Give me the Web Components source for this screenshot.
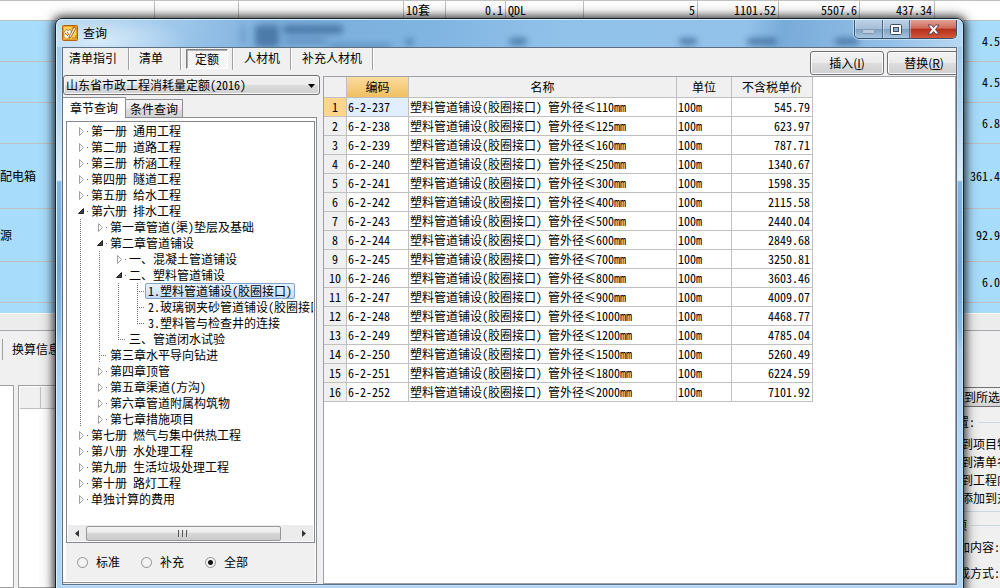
<!DOCTYPE html>
<html lang="zh-CN">
<head>
<meta charset="utf-8">
<title>查询</title>
<style>
html,body{margin:0;height:100%;overflow:hidden}
body{position:relative;background:#f0f0f0;color:#000;font:12px/16px "Noto Sans Mono CJK SC","Noto Sans CJK SC","Liberation Mono",monospace}
</style>
</head>
<body>
<estimate-app></estimate-app>
<query-window heading="查询">
  <query-toolbar slot="toolbar"></query-toolbar>
  <chapter-panel slot="side"></chapter-panel>
  <price-table slot="main"></price-table>
</query-window>
<script>
const define=(name,render)=>customElements.define(name,class extends HTMLElement{
  connectedCallback(){
    if(this.shadowRoot)return;
    this.attachShadow({mode:'open'}).innerHTML='<style>*{box-sizing:border-box}</style>'+render(this);
  }
});

/* Estimate sheet and side panes behind the dialog */
const sheetRows=[[41,'','4.5'],[41,'','4.5'],[41,'','6.8'],[65,'配电箱','361.4'],[53,'源','92.9'],[41,'','6.0'],[10,'','']];
define('estimate-app',()=>`<style>
:host{display:flex;flex-direction:column;height:100%;overflow:hidden;background:#f0f0f0}
table{width:100%;table-layout:fixed;border-collapse:separate;border-spacing:0;flex:none}
.top{background:#fff;border-top:1px solid #c0c0c0}
.top td{height:20px;padding:0 2px 2px;border-right:1px solid #c0c0c0;border-bottom:1px solid #c0c0c0;white-space:nowrap}
.top td:last-child{border-right:0}
.r{text-align:right}
.blue{background:#a8dcfb}
.blue td{padding:0;border-bottom:1px solid #bfbfbf;white-space:nowrap}
.blue tr:last-child td{border:0}
.strip{flex:none;height:18px;background:#ececec;border-top:1px solid #fff;border-bottom:1px solid #a5a5b0}
.lower{flex:1;display:flex;justify-content:space-between;min-height:0}
.left{display:flex;flex-direction:column;width:120px;padding-top:8px}
.tab{height:21px;border-left:1px solid #a0a0a0;margin-left:2px;padding:2px 9px}
.panes{flex:1;display:flex;gap:4px;margin-top:25px}
.pane{border:1px solid #a0a0a0;background:#fff;width:14px;border-left:0}
.pane+.pane{flex:1;border-left:1px solid #a0a0a0}
.head{height:22px;margin:1px 0 0 1px;background:#f0f0f0;border-bottom:1px solid #c0c0c0}
.head i{display:block;width:21px;height:21px;border-right:1px solid #c0c0c0}
.right{width:51px;padding-top:56px;white-space:nowrap;overflow:hidden}
.right button{display:block;font:inherit;color:inherit;padding:0 0 0 14px;width:80px;height:20px;text-align:left;border:1px solid #707070;background:linear-gradient(#f3f3f3,#d4d4d4)}
.right h3{display:flex;align-items:center;gap:4px;font:inherit;margin:7px 0 6px;margin-left:-4px}
.right h3:after{content:"";flex:1;height:1px;background:#c8d8e0}
.right p{margin:0;height:18px;padding-left:12px}
.right h3.two{margin:5px 0 6px -6px}
.right .f{height:26px;padding-left:9px}
.rule{height:1px;background:#c8d8e0;margin-top:3px}
</style>
<table class="top"><colgroup><col style="width:155px"><col style="width:84px"><col style="width:165px"><col style="width:42px"><col style="width:60px"><col style="width:78px"><col style="width:114px"><col style="width:81px"><col style="width:81px"><col style="width:75px"><col></colgroup>
<tr><td></td><td></td><td></td><td>10套</td><td class="r">0.1</td><td>QDL</td><td class="r">5</td><td class="r">1101.52</td><td class="r">5507.6</td><td class="r">437.34</td><td></td></tr></table>
<table class="blue">${sheetRows.map(([h,a,b])=>`<tr><td style="height:${h}px">${a}</td><td class="r">${b}</td></tr>`).join('')}</table>
<div class="strip"></div>
<div class="lower">
<div class="left"><div class="tab">换算信息</div><div class="panes"><div class="pane"></div><div class="pane"><div class="head"><i></i></div></div></div></div>
<div class="right"><button type="button">到所选</button><h3>位置:</h3><p>到项目特</p><p>到清单名</p><p>到工程内</p><p>添加到对</p><div class="rule"></div><h3 class="two">选项</h3><p class="f">加内容:</p><p class="f">成方式:</p></div>
</div>`);

/* Glass window frame */
define('query-window',el=>`<style>
:host{position:absolute;left:55px;right:36px;top:18px;bottom:-4px;display:flex;flex-direction:column;padding:0 6px 6px;border:1px solid #17242f;border-radius:7px 7px 0 0;
box-shadow:inset 1px 1px #d8f2ff,inset -1px 0 #c0e8fc,0 0 7px 2px rgba(0,0,0,.6),0 0 14px 3px rgba(0,0,0,.3);
background:linear-gradient(#9bc4e8 0,#b8d6f0 90px,#e2eef8 161px,#86b6e2 163px,#74a7d5 250px,#8abae4 310px,#a9cbec 330px,#b5d8f8 420px,#b0d4f5)}
header{position:relative;flex:none;display:flex;align-items:center;height:28px;margin:0 -5px;padding:0 5px 2px;overflow:hidden;border-radius:6px 6px 0 0;border-top:1px solid #d5efff;
background:radial-gradient(ellipse 90px 28px at 40px 20px,rgba(220,238,252,.9),transparent),linear-gradient(100deg,#b3d3ef 0,#9cc6ea 14%,#7caedc 24%,#7fb3e0 40%,#91c2ea 56%,#92c2ea 76%,#79abd9 80%,#93c0e8 92%,#b9d8f2)}
svg.app{margin-right:5px}
h1{flex:1;margin:0;font:12px/16px "Noto Sans CJK SC",sans-serif}
.smudge{position:absolute;border-radius:4px;background:#24507f;filter:blur(3px);opacity:.6}
.caps{position:relative;align-self:flex-start;display:flex;height:19px;border:1px solid #35516c;border-top:0;border-radius:0 0 5px 5px;overflow:hidden;box-shadow:0 0 0 1px rgba(220,240,255,.6)}
.caps button{width:28px;padding:0;border:0;border-right:1px solid #4b6a88;background:linear-gradient(#bcd1e6,#a5bed8 48%,#7f9fbf 50%,#a6c6e2);box-shadow:inset 1px 0 rgba(255,255,255,.4);display:grid;place-items:center}
.caps button:first-child{padding-top:4px}
.caps button:nth-child(2){width:27px}
.caps button.close{width:46px;border-right:0;background:linear-gradient(#e2a194,#cf6a58 46%,#b32e18 50%,#d4573c)}
main{flex:1;min-height:0;display:flex;flex-direction:column;background:#f0f0f0;border:1px solid #5d6f82;outline:1px solid rgba(205,232,252,.7);overflow:hidden}
.body{flex:1;min-height:0;display:flex;gap:3px}
</style>
<header>
<span class="smudge" style="left:198px;top:5px;width:24px;height:22px;opacity:.55"></span>
<span class="smudge" style="left:184px;top:6px;width:4px;height:18px;opacity:.3"></span>
<span class="smudge" style="left:226px;top:5px;width:60px;height:9px;opacity:.55"></span>
<span class="smudge" style="left:228px;top:18px;width:42px;height:6px;opacity:.3"></span>
<span class="smudge" style="left:272px;top:24px;width:62px;height:5px;opacity:.35"></span>
<span class="smudge" style="left:349px;top:19px;width:7px;height:6px"></span>
<span class="smudge" style="left:452px;top:18px;width:18px;height:7px"></span>
<span class="smudge" style="left:622px;top:18px;width:18px;height:7px"></span>
<span class="smudge" style="left:690px;top:18px;width:30px;height:7px"></span>
<span class="smudge" style="left:778px;top:18px;width:24px;height:7px"></span>
<svg class="app" width="16" height="16" viewBox="0 0 16 16"><rect x=".5" y=".5" width="15" height="15" rx="1" fill="#f0a020" stroke="#b5640c"/><path d="M2 2h8l-1 3 4-3h1v12H2z" fill="#ffd45e"/><path d="M2 7l3-3 1 2 2-2 2 4-2 5-3 1-3-2z" fill="#fff8e4" stroke="#a65a0c" stroke-width=".6"/><path d="M7 12l5-10 2 1-5 9-2 1z" fill="#fff" stroke="#87440a" stroke-width=".8"/><path d="M3 8l3 3M5 7l2 3M10 13h4v-3" stroke="#c06a0e" fill="none"/></svg>
<h1>${el.getAttribute('heading')}</h1>
<div class="caps">
<button type="button" aria-label="最小化"><svg width="13" height="5"><rect x=".5" y=".5" width="12" height="4" rx="1" fill="#b9cbdc" stroke="#8499af"/></svg></button>
<button type="button" aria-label="最大化"><svg width="12" height="11"><rect x=".5" y=".5" width="11" height="10" rx="1" fill="#fff" stroke="#414c63"/><rect x="3.5" y="3.5" width="5" height="4" fill="#8fadca" stroke="#414c63"/></svg></button>
<button type="button" class="close" aria-label="关闭"><svg width="13" height="11" viewBox="0 0 13 11"><path d="M1 1h3.500l2 2.500 2-2.500H12L8.500 5.500 12 10H8.500l-2-2.500-2 2.500H1l3.500-4.500z" fill="#f6f6f6" stroke="#513a49" stroke-width=".9"/></svg></button>
</div></header>
<main><slot name="toolbar"></slot><div class="body"><slot name="side"></slot><slot name="main"></slot></div></main>`);

define('query-toolbar',()=>`<style>
:host{display:flex;justify-content:space-between;height:27px;flex:none}
nav{display:flex;height:22px}
nav button{font:inherit;color:inherit;border:0;background:none;padding:0 10px;height:20px}
nav span{display:flex;border-right:1px solid #a0a0a0;box-shadow:1px 0 #fff;margin-right:1px}
nav span:first-child button{padding:0 11px 0 6px}
nav span:nth-child(2) button{padding:0 17px 0 9px}
nav span:nth-child(3){padding:1px 4px}
nav span:nth-child(4) button{padding:0 10px}
nav button[aria-pressed=true]{width:42px;padding:0;border:1px solid;border-color:#808080 #fff #fff #808080;box-shadow:inset 1px 1px #b0b0b0;background:repeating-conic-gradient(#fff 0 25%,#ededed 0 50%) 0 0/2px 2px}
.acts{display:flex;gap:3px;margin:3px -5px 0 0}
.acts button{width:74px;height:24px;padding:0;border:1px solid #707070;border-radius:3px;box-shadow:inset 0 0 0 1px #fcfcfc;background:linear-gradient(#f2f2f2,#ebebeb 48%,#dddddd 50%,#cfcfcf);font:12px/16px "Noto Sans CJK SC",sans-serif;color:#000}
</style>
<nav><span><button type="button">清单指引</button></span><span><button type="button">清单</button></span><span><button type="button" aria-pressed="true">定额</button></span><span><button type="button">人材机</button></span><span><button type="button">补充人材机</button></span></nav>
<div class="acts"><button type="button">插入(<u>I</u>)</button><button type="button">替换(<u>R</u>)</button></div>`);

define('chapter-panel',()=>`<style>
:host{display:flex;flex-direction:column;width:257px;flex:none}
.combo{position:relative;flex:none}
select{appearance:none;display:block;width:100%;height:20px;padding:0 2px;margin:0;font:inherit;color:inherit;border:1px solid #707070;border-radius:3px;box-shadow:inset 0 0 0 1px #fafafa;background:linear-gradient(#f2f2f2,#ebebeb 48%,#dddddd 50%,#cfcfcf)}
.combo svg{position:absolute;right:5px;top:9px;pointer-events:none}
.tabs{display:flex;align-items:flex-end;height:21px;margin:2px 0 -1px;position:relative}
.tabs button{font:inherit;color:inherit;padding:0;width:57px;height:19px;border:1px solid #8c8e94;background:linear-gradient(#f2f2f2,#ebebeb 50%,#dddddd 52%,#d0d0d0)}
.tabs button[aria-selected=true]{width:63px;height:21px;background:#fff;border-bottom:0;border-left:0}
.tabs button+button{border-left:0}
.pane{flex:1;min-height:0;display:flex;flex-direction:column;width:254px;padding:3px 1px 1px 3px;margin-bottom:1px;border:1px solid #8c8e94;border-left:0;background:#fff}
.box{flex:1;min-height:0;display:flex;flex-direction:column;border:1px solid #828790;padding:1px}
chapter-tree{flex:1}
.bar{display:flex;align-items:center;height:16px;background:#ececec}
.bar button{width:18px;height:16px;padding:0;border:0;background:none;display:grid;place-items:center}
.thumb{flex:1;display:flex;justify-content:center;align-items:center;gap:1px;height:15px;border:1px solid #979797;border-radius:2px;margin-right:14px;background:linear-gradient(#f5f5f5,#e8e8e8 48%,#d6d6d6 50%,#cbcbcb)}
.thumb i{width:2px;height:7px;margin-right:1px;background:linear-gradient(90deg,#555 50%,#ddd 50%)}
.kinds{display:flex;flex:none;align-items:center;height:38px;padding:0 11px;background:#f0f0f0}
label{display:flex;align-items:center;gap:8px;width:64px}
input{appearance:none;flex:none;width:11px;height:11px;margin:0;border:1px solid #8e8f8f;border-radius:50%;background:#f4f4f4}
input:checked{background:radial-gradient(circle,#111 0 2px,#f4f4f4 3px)}
</style>
<div class="combo"><select aria-label="定额库"><option>山东省市政工程消耗量定额(2016)</option></select><svg width="7" height="4"><path d="M0 0h7L3.500 4z"/></svg></div>
<div class="tabs" role="tablist"><button type="button" role="tab" aria-selected="true">章节查询</button><button type="button" role="tab">条件查询</button></div>
<div class="pane"><div class="box"><chapter-tree></chapter-tree>
<div class="bar"><button type="button" aria-label="向左"><svg width="4" height="7"><path d="M4 0v7L0 3.500z" fill="#333"/></svg></button><div class="thumb"><i></i><i></i><i></i></div><button type="button" aria-label="向右"><svg width="4" height="7"><path d="M0 0v7L4 3.500z" fill="#333"/></svg></button></div></div>
<div class="kinds" role="radiogroup"><label><input type="radio" name="k">标准</label><label><input type="radio" name="k">补充</label><label><input type="radio" name="k" checked>全部</label></div></div>`);

/* One letter per indent cell: v line, t branch, e last branch, c closed, o open */
const nodes=[['c','第一册 通用工程'],['c','第二册 道路工程'],['c','第三册 桥涵工程'],['c','第四册 隧道工程'],['c','第五册 给水工程'],['o','第六册 排水工程'],
['vc','第一章管道(渠)垫层及基础'],['vo','第二章管道铺设'],['vvc','一、混凝土管道铺设'],['vvo','二、塑料管道铺设'],
['vvvt','1.塑料管道铺设(胶圈接口)',1],['vvvt','2.玻璃钢夹砂管道铺设(胶圈接口)'],['vvve','3.塑料管与检查井的连接'],['vve','三、管道闭水试验'],
['vt','第三章水平导向钻进'],['vc','第四章顶管'],['vc','第五章渠道(方沟)'],['vc','第六章管道附属构筑物'],['vc','第七章措施项目'],
['c','第七册 燃气与集中供热工程'],['c','第八册 水处理工程'],['c','第九册 生活垃圾处理工程'],['c','第十册 路灯工程'],['c','单独计算的费用']];
const guides={
v:'<path d="M11.500 0v16"/>',t:'<path d="M11.500 0v16M11 8.500h8"/>',e:'<path d="M11.500 0v8M11 8.500h8"/>',
c:'<path class="a" d="M10.500 4.500v8l4-4z"/><path d="M18.500 8v1"/>',o:'<path class="b" d="M14.500 5.500v5H9.500z"/><path d="M18.500 8v1"/>'};
define('chapter-tree',()=>`<style>
:host{display:block;min-height:0;overflow:hidden}
ul{list-style:none;margin:0;padding:0 0 0 1px}
li{display:flex;height:16px;white-space:nowrap}
svg{flex:none;width:19px;height:16px}
path{fill:none;stroke:#707070;stroke-dasharray:1 1}
.a{stroke:#a0a0a0;stroke-dasharray:none}
.b{fill:#404040;stroke:#222;stroke-dasharray:none}
span{height:16px;line-height:14px;padding:0 2px;border:1px solid transparent;border-radius:2px}
.on{border-color:#7da2ce;background:linear-gradient(#ebf3fd,#c4dcfb)}
</style><ul role="tree">${nodes.map(([g,t,s])=>`<li role="treeitem">${[...g].map(c=>`<svg>${guides[c]}</svg>`).join('')}<span class="${s?'on':''}">${t}</span></li>`).join('')}</ul>`);

const items=[[237,110,'545.79'],[238,125,'623.97'],[239,160,'787.71'],[240,250,'1340.67'],[241,300,'1598.35'],[242,400,'2115.58'],[243,500,'2440.04'],[244,600,'2849.68'],[245,700,'3250.81'],[246,800,'3603.46'],[247,900,'4009.07'],[248,1000,'4468.77'],[249,1200,'4785.04'],[250,1500,'5260.49'],[251,1800,'6224.59'],[252,2000,'7101.92']];
define('price-table',()=>`<style>
:host{display:block;flex:1;min-width:0;margin-top:1px;background:#fff;border:1px solid #a0a0a8;overflow:hidden}
table{table-layout:fixed;width:489px;border-collapse:separate;border-spacing:0}
th,td{font-weight:400;padding:0 2px;height:19px;line-height:16px;border-right:1px solid #c0c0c0;border-bottom:1px solid #c0c0c0;white-space:nowrap;overflow:hidden}
thead th{height:21px;background:#f0f0f0}
thead .on{background:linear-gradient(#fbdb9d,#f0c060)}
tbody th{padding:0;background:#f0f0f0;text-align:center}
tbody tr:first-child th{background:#ffd58d}
tbody tr:first-child th+td{background:#e0eeff}
td{text-align:left;padding:0 2px 0 1px}
td:last-child{text-align:right}
</style><table><colgroup><col style="width:23px"><col style="width:62px"><col style="width:268px"><col style="width:55px"><col style="width:81px"></colgroup>
<thead><tr><th></th><th class="on">编码</th><th>名称</th><th>单位</th><th>不含税单价</th></tr></thead>
<tbody>${items.map(([c,d,p],i)=>`<tr><th>${i+1}</th><td>6-2-${c}</td><td>塑料管道铺设(胶圈接口) 管外径≤${d}mm</td><td>100m</td><td>${p}</td></tr>`).join('')}</tbody></table>`);
</script>
</body>
</html>
